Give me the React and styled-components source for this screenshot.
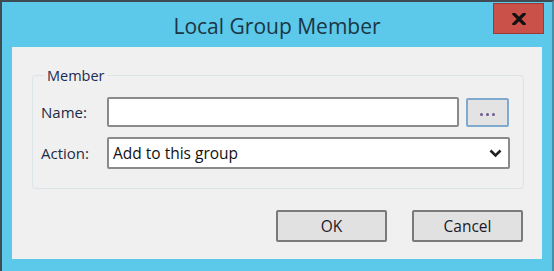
import React from "react"
import styled, { createGlobalStyle } from "styled-components"

const Global = createGlobalStyle`
  html, body {
    margin: 0;
    padding: 0;
    background: #ffffff;
  }
  * {
    box-sizing: border-box;
  }
`

const Window = styled.div`
  width: 554px;
  height: 271px;
  background: #5cc8ea;
  border-top: 2px solid #3e4b52;
  border-left: 2px solid #3e4b52;
  border-right: 2px solid #4b8fa6;
  display: flex;
  flex-direction: column;
  font-family: "Open Sans", "Noto Sans", sans-serif;
  color: #1d2b45;
`

const TitleBar = styled.div`
  height: 46px;
  display: flex;
  align-items: center;
  justify-content: center;
  position: relative;
`

const Title = styled.div`
  font-size: 21px;
  color: #1c3542;
  padding-top: 3px;
`

const CloseButton = styled.div`
  position: absolute;
  top: 1px;
  right: 8px;
  width: 51px;
  height: 31px;
  background: #c9514a;
  border: 1px solid #9c3a35;
  display: flex;
  align-items: center;
  justify-content: center;
  color: #111;
`

const Body = styled.div`
  flex: 1;
  margin: 0 10px 12px 10px;
  background: #f0f0f0;
  padding: 19px 18px 17px 20px;
  display: flex;
  flex-direction: column;
`

const GroupBox = styled.fieldset`
  margin: 0;
  padding: 12px 13px 19px 8px;
  border: 1px solid #dce4e8;
  border-radius: 3px;
  display: grid;
  grid-template-columns: 66px 1fr 51px;
  row-gap: 10px;
  align-items: center;
  min-width: 0;
`

const Legend = styled.legend`
  font-size: 14.5px;
  padding: 0 2px;
  margin-left: 4px;
  color: #1d2b55;
`

const Label = styled.span`
  font-size: 15px;
  color: #1d2b45;
`

const TextBox = styled.div`
  height: ${p => (p.$wide ? "32px" : "30px")};
  background: #ffffff;
  border: 2px solid #8a8a8a;
  border-radius: 2px;
  grid-column: ${p => (p.$wide ? "2 / 4" : "2 / 3")};
  display: flex;
  align-items: center;
  justify-content: space-between;
  padding: 0 6px 0 4px;
  font-size: 15.5px;
  color: #111;
`

const BrowseButton = styled.div`
  justify-self: end;
  width: 43px;
  height: 29px;
  margin-right: 1px;
  background: #e3e3e3;
  border: 2px solid #7fa9cf;
  border-radius: 2px;
  display: flex;
  align-items: center;
  justify-content: center;
  gap: 3px;
  padding-top: 4px;
`

const Dot = styled.span`
  width: 3px;
  height: 3px;
  border-radius: 50%;
  background: #6e5a8c;
`

const ButtonRow = styled.div`
  display: flex;
  justify-content: flex-end;
  gap: 25px;
  margin-top: 21px;
  padding-right: 1px;
`

const Button = styled.div`
  width: 111px;
  height: 32px;
  background: #e1e1e1;
  border: 2px solid #7a7a7a;
  border-radius: 2px;
  display: flex;
  align-items: center;
  justify-content: center;
  font-size: 15.5px;
  color: #1a1a2a;
`

const App = () => {
  return (
    <>
      <Global />
      <Window>
        <TitleBar>
          <Title>Local Group Member</Title>
          <CloseButton>
            <svg width="14" height="12" viewBox="0 0 14 12">
              <path d="M2 1 L12 11 M12 1 L2 11" stroke="#111" strokeWidth="3.2" strokeLinecap="square" />
            </svg>
          </CloseButton>
        </TitleBar>
        <Body>
          <GroupBox>
            <Legend>Member</Legend>
            <Label>Name:</Label>
            <TextBox />
            <BrowseButton>
              <Dot />
              <Dot />
              <Dot />
            </BrowseButton>
            <Label>Action:</Label>
            <TextBox $wide>
              <span>Add to this group</span>
              <svg width="13" height="9" viewBox="0 0 13 9">
                <path d="M1.5 1.5 L6.5 6.5 L11.5 1.5" fill="none" stroke="#222" strokeWidth="2.6" />
              </svg>
            </TextBox>
          </GroupBox>
          <ButtonRow>
            <Button>OK</Button>
            <Button>Cancel</Button>
          </ButtonRow>
        </Body>
      </Window>
    </>
  )
}

export default App
